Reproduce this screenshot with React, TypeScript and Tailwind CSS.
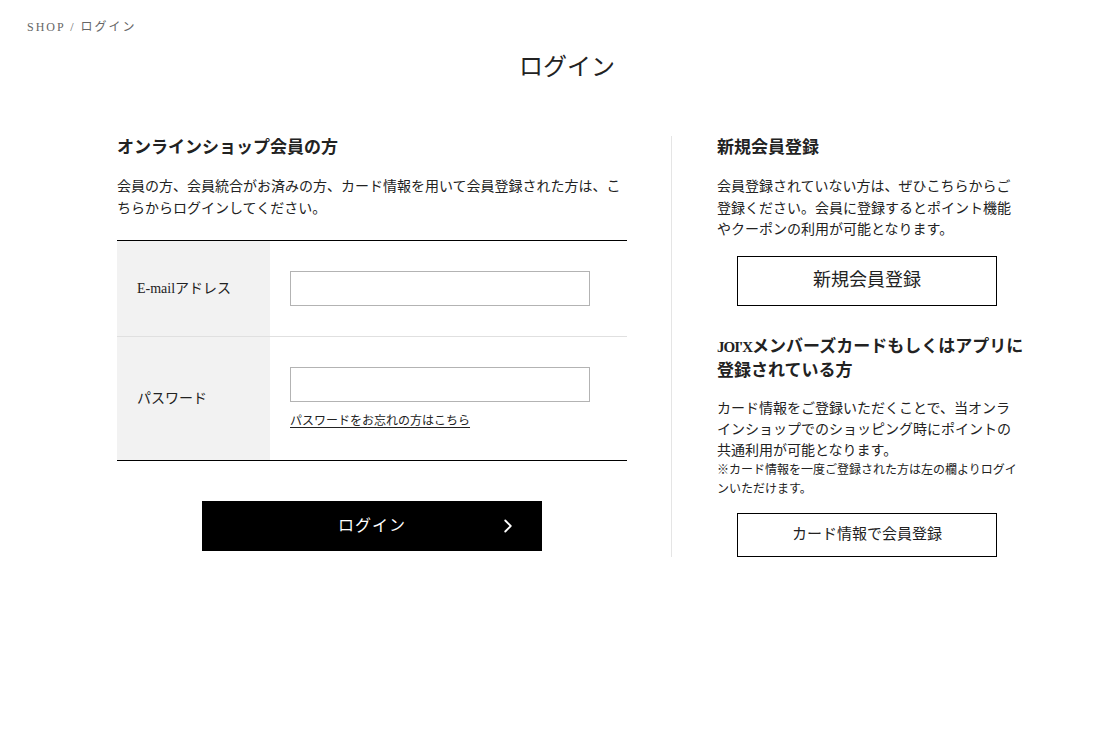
import { ChevronRight } from "lucide-react";

const fontStack = "font-['Liberation_Serif','Noto_Sans_CJK_JP',serif]";

export default function App() {
  return (
    <div className={`min-h-[740px] bg-white text-[#222] ${fontStack}`}>
      {/* breadcrumb */}
      <div className="pt-[19px] pl-[27px] text-[12px] leading-[16px] tracking-[2px] text-[#666]">
        SHOP / ログイン
      </div>

      <div className="pl-[117px]">
        <div className="w-[900px]">
          <h1 className="mt-[16px] text-center text-[24px] leading-[32px] font-normal text-[#222]">
            ログイン
          </h1>

          <div className="mt-[53px] flex">
            {/* left: member login */}
            <div className="w-[510px]">
              <h2 className="text-[17px] font-bold leading-[24px]">オンラインショップ会員の方</h2>
              <p className="mt-[16px] text-[14px] leading-[22px]">
                会員の方、会員統合がお済みの方、カード情報を用いて会員登録された方は、こちらからログインしてください。
              </p>

              <div className="mt-[20px] border-y border-black">
                <div className="flex border-b border-[#e0e0e0]">
                  <div className="flex w-[153px] items-center bg-[#f2f2f2] pl-[20px] text-[14px]">
                    E-mailアドレス
                  </div>
                  <div className="py-[30px] pl-[20px]">
                    <input
                      type="email"
                      className="block h-[35px] w-[300px] border border-[#b3b3b3] bg-white px-2 text-[14px] outline-none"
                    />
                  </div>
                </div>
                <div className="flex">
                  <div className="flex w-[153px] items-center bg-[#f2f2f2] pl-[20px] text-[14px]">
                    パスワード
                  </div>
                  <div className="pt-[30px] pb-[30px] pl-[20px]">
                    <input
                      type="password"
                      className="block h-[35px] w-[300px] border border-[#b3b3b3] bg-white px-2 text-[14px] outline-none"
                    />
                    <a href="#" className="mt-[10px] block text-[12px] leading-[18px] text-[#222] underline underline-offset-2">
                      パスワードをお忘れの方はこちら
                    </a>
                  </div>
                </div>
              </div>

              <button className="relative mx-auto mt-[40px] flex h-[50px] w-[340px] items-center justify-center bg-black text-[16px] tracking-[1px] text-white">
                ログイン
                <ChevronRight className="absolute right-[23px] h-[22px] w-[22px]" strokeWidth={2} />
              </button>
            </div>

            {/* right: registration */}
            <div className="ml-[44px] border-l border-[#e5e5e5] pl-[45px]">
              <div className="w-[300px]">
                <h3 className="text-[17px] font-bold leading-[24px]">新規会員登録</h3>
                <p className="mt-[16px] text-[14px] leading-[21.5px]">
                  会員登録されていない方は、ぜひこちらからご登録ください。会員に登録するとポイント機能やクーポンの利用が可能となります。
                </p>
                <a
                  href="#"
                  className="mx-[20px] mt-[15px] flex h-[50px] w-[260px] items-center justify-center border border-black text-[18px]"
                >
                  新規会員登録
                </a>

                <h3 className="mt-[29px] whitespace-nowrap text-[17px] font-bold leading-[24px]">
                  <span className="text-[15px] tracking-[-1px]">JOI'X</span>メンバーズカードもしくはアプリに
                  <br />
                  登録されている方
                </h3>
                <p className="mt-[15px] text-[14px] leading-[21px]">
                  カード情報をご登録いただくことで、当オンラインショップでのショッピング時にポイントの共通利用が可能となります。
                </p>
                <p className="text-[12px] leading-[19px]">
                  ※カード情報を一度ご登録された方は左の欄よりログインいただけます。
                </p>
                <a
                  href="#"
                  className="mx-[20px] mt-[14px] flex h-[44px] w-[260px] items-center justify-center border border-black text-[15px]"
                >
                  カード情報で会員登録
                </a>
              </div>
            </div>
          </div>
        </div>
      </div>
    </div>
  );
}
